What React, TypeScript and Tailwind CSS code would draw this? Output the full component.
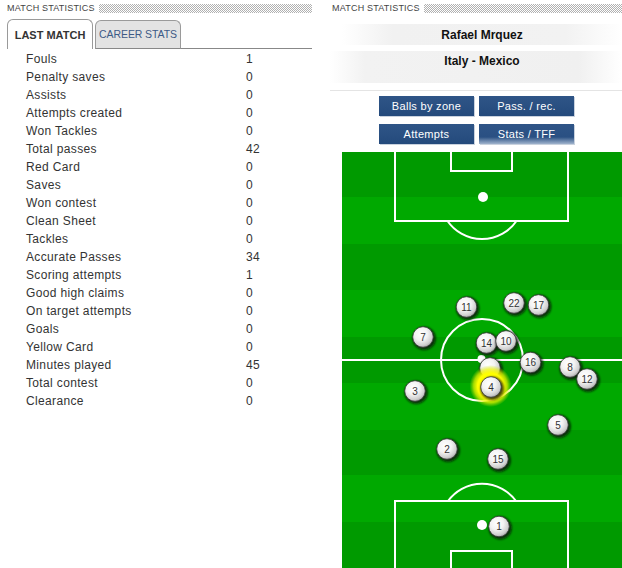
import React from "react";

const stats: [string, string][] = [
  ["Fouls", "1"],
  ["Penalty saves", "0"],
  ["Assists", "0"],
  ["Attempts created", "0"],
  ["Won Tackles", "0"],
  ["Total passes", "42"],
  ["Red Card", "0"],
  ["Saves", "0"],
  ["Won contest", "0"],
  ["Clean Sheet", "0"],
  ["Tackles", "0"],
  ["Accurate Passes", "34"],
  ["Scoring attempts", "1"],
  ["Good high claims", "0"],
  ["On target attempts", "0"],
  ["Goals", "0"],
  ["Yellow Card", "0"],
  ["Minutes played", "45"],
  ["Total contest", "0"],
  ["Clearance", "0"],
];

const players: { n: string; x: number; y: number; glow?: boolean }[] = [
  { n: "11", x: 124.5, y: 155 },
  { n: "22", x: 172, y: 151 },
  { n: "17", x: 196.5, y: 153 },
  { n: "7", x: 81, y: 185 },
  { n: "14", x: 144.5, y: 191 },
  { n: "10", x: 164, y: 189 },
  { n: "16", x: 188.5, y: 210.5 },
  { n: "8", x: 228, y: 215 },
  { n: "12", x: 245, y: 227 },
  { n: "3", x: 73, y: 239 },
  { n: "", x: 148, y: 216 },
  { n: "4", x: 149, y: 235, glow: true },
  { n: "5", x: 216, y: 273 },
  { n: "2", x: 105, y: 297 },
  { n: "15", x: 156, y: 307 },
  { n: "1", x: 157, y: 374.5 },
];

const stripeBounds = [0, 45, 92, 138, 185, 231, 278, 323, 370, 416];

function Pitch() {
  return (
    <svg width="280" height="416" viewBox="0 0 280 416" className="block">
      <defs>
        <radialGradient id="tok" cx="40%" cy="35%" r="70%">
          <stop offset="0%" stopColor="#ffffff" />
          <stop offset="45%" stopColor="#f3f3f3" />
          <stop offset="80%" stopColor="#cfcfcf" />
          <stop offset="100%" stopColor="#9a9a9a" />
        </radialGradient>
        <radialGradient id="glow" cx="50%" cy="50%" r="50%">
          <stop offset="0%" stopColor="#ffff00" stopOpacity="1" />
          <stop offset="62%" stopColor="#ffff00" stopOpacity="1" />
          <stop offset="80%" stopColor="#eef400" stopOpacity="0.7" />
          <stop offset="100%" stopColor="#c8e000" stopOpacity="0" />
        </radialGradient>
        <filter id="blur" x="-50%" y="-50%" width="200%" height="200%">
          <feGaussianBlur stdDeviation="1" />
        </filter>
      </defs>
      {stripeBounds.slice(0, -1).map((b, i) => (
        <rect
          key={i}
          x="0"
          y={b}
          width="280"
          height={stripeBounds[i + 1] - b}
          fill={i % 2 === 0 ? "#009a00" : "#00a900"}
        />
      ))}
      <g stroke="#ffffff" strokeWidth="2" fill="none">
        <rect x="53" y="-2" width="173" height="71" />
        <rect x="109" y="-2" width="61" height="21" />
        <path d="M105.5 69 A42 42 0 0 0 174.5 69" />
        <line x1="0" y1="208" x2="280" y2="208" />
        <circle cx="140" cy="208" r="41" />
        <rect x="53" y="349" width="173" height="71" />
        <rect x="109" y="399" width="61" height="21" />
        <path d="M106 349 A42 42 0 0 1 174 349" />
      </g>
      <circle cx="141" cy="45" r="5" fill="#fff" />
      <circle cx="139.5" cy="207" r="4" fill="#fff" />
      <circle cx="140" cy="373" r="5" fill="#fff" />
      {players.map((p, i) => (
        <g key={i}>
          {p.glow && <circle cx={p.x - 0.5} cy={p.y - 1} r="21" fill="url(#glow)" />}
          <circle cx={p.x + 1.2} cy={p.y + 1.4} r="11.6" fill="#0a0a0a" opacity="0.75" filter="url(#blur)" />
          <circle cx={p.x} cy={p.y} r="10.3" fill="url(#tok)" stroke="#3a3a3a" strokeWidth="0.8" />
          {p.n && (
            <text
              x={p.x}
              y={p.y + 3.6}
              textAnchor="middle"
              fontSize="10"
              fontFamily="'Liberation Sans', Arial, sans-serif"
              fill="#333"
            >
              {p.n}
            </text>
          )}
        </g>
      ))}
    </svg>
  );
}

function Dots() {
  return (
    <div className="flex-1 h-[9px] bg-[image:conic-gradient(#b0b0b0_90deg,transparent_90deg_180deg,#b0b0b0_180deg_270deg,transparent_270deg)] bg-[length:2px_2px]" />
  );
}

export default function App() {
  return (
    <div className="w-[622px] h-[568px] flex bg-white overflow-hidden font-['Liberation_Sans',Arial,sans-serif]">
      {/* Left panel */}
      <div className="w-[312px] shrink-0 pt-[3px]">
        <div className="flex items-center h-[10px] pl-[7px]">
          <span className="text-[9px] leading-[10px] tracking-[0.2px] text-[#444] whitespace-nowrap">
            MATCH STATISTICS
          </span>
          <div className="ml-[4px] flex-1 flex">
            <Dots />
          </div>
        </div>
        <div className="mt-[6px] flex items-end h-[30px] pl-[7px]">
          <div className="w-[86px] h-[30px] border border-b-0 border-[#9a9a9a] rounded-t-[6px] bg-white flex items-center justify-center text-[11px] font-bold text-[#333] pt-[2px]">
            LAST MATCH
          </div>
          <div className="ml-[2px] w-[86px] h-[29px] border border-[#9a9a9a] border-b-[#888] rounded-t-[6px] bg-[#e3e3e3] flex items-center justify-center text-[10.5px] text-[#3d5a86] tracking-[-0.1px]">
            CAREER STATS
          </div>
          <div className="flex-1 h-[30px] border-b border-[#888]" />
        </div>
        <div className="pt-[1px] pl-[26px] text-[12px] tracking-[0.35px] text-[#333]">
          {stats.map(([l, v]) => (
            <div key={l} className="flex h-[18px] leading-[18px]">
              <span className="w-[220px]">{l}</span>
              <span>{v}</span>
            </div>
          ))}
        </div>
      </div>

      {/* Right panel */}
      <div className="ml-[18px] w-[292px] shrink-0 pt-[3px]">
        <div className="flex items-center h-[10px] pl-[2px]">
          <span className="text-[9px] leading-[10px] tracking-[0.2px] text-[#444] whitespace-nowrap">
            MATCH STATISTICS
          </span>
          <div className="ml-[4px] flex-1 flex">
            <Dots />
          </div>
        </div>
        <div className="mt-[11px] ml-[12px] w-[280px] h-[21px] bg-[linear-gradient(to_right,#ffffff,#f1f1f1_18%,#f2f2f2_80%,#ffffff)] flex items-center justify-center text-[12px] font-bold text-[#111]">
          Rafael Mrquez
        </div>
        <div className="mt-[6px] ml-[0px] w-[292px] h-[32px] bg-[linear-gradient(to_right,#ffffff,#f2f2f2_12%,#f0f0f0_85%,#ffffff)] flex justify-center pl-[12px] pt-[3px] text-[12px] leading-[14px] font-bold text-[#111]">
          Italy - Mexico
        </div>
        <div className="mt-[7px] h-px bg-[#e4e4e4]" />
        <div className="mt-[5px] pl-[49px] grid grid-cols-[95px_95px] gap-x-[5px] gap-y-[8px]">
          {["Balls by zone", "Pass. / rec.", "Attempts", "Stats / TFF"].map((t, i) => (
            <div
              key={t}
              className={
                i === 3
                  ? "h-[20px] flex items-center justify-center text-[11px] tracking-[0.3px] text-white bg-[linear-gradient(#2f5587,#2a5083_65%,#9fb3cc)] shadow-[1px_1px_0_#c9d2de]"
                  : "h-[20px] flex items-center justify-center text-[11px] tracking-[0.3px] text-white bg-[linear-gradient(#2f5587,#244a7c)] shadow-[1px_1px_0_#c9d2de]"
              }
            >
              {t}
            </div>
          ))}
        </div>
        <div className="mt-[8px] ml-[12px]">
          <Pitch />
        </div>
      </div>
    </div>
  );
}
